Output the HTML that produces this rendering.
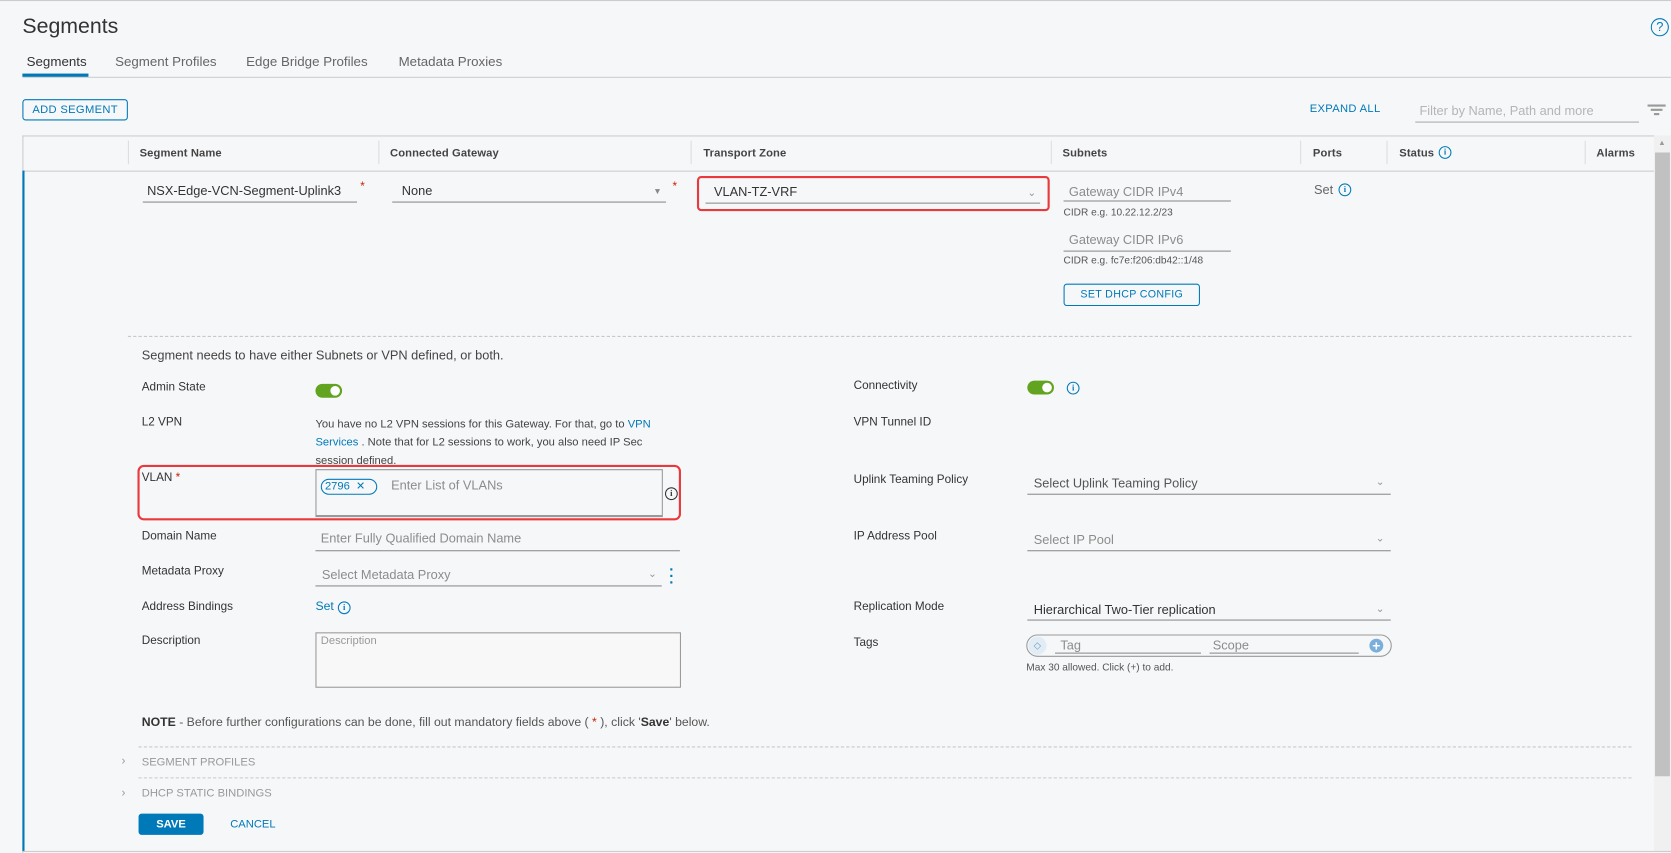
<!DOCTYPE html>
<html><head><meta charset="utf-8"><style>
html,body{margin:0;padding:0;width:1671px;height:852px;overflow:hidden;background:#f6f7f9}
#w{position:absolute;left:0;top:0;width:1568px;height:800px;transform:scale(1.06569,1.0663);transform-origin:0 0;font-family:"Liberation Sans",sans-serif;color:#333;background:#f6f7f9}
#w div,#w span{position:absolute;white-space:nowrap}
.l{font-size:11px;color:#333}
.ph{font-size:12px;color:#8c8c8c}
.u{height:1px;background:#8c8c8c}
.hd{font-size:10.5px;color:#444;top:138px;font-weight:bold;letter-spacing:.1px}
.sep{top:132px;width:1px;height:22px;background:#ddd}
.info{width:10px;height:10px;border:1.3px solid #0079b8;border-radius:50%;font-size:8px;line-height:10px;text-align:center;color:#0079b8;font-weight:bold;font-family:"Liberation Serif",serif}
.chev{font-size:10px;color:#999}
.tg{width:25px;height:13px;background:#62a420;border-radius:8px}
.tg::after{content:"";position:absolute;right:2px;top:2px;width:9px;height:9px;border-radius:50%;background:#fff}
.dash{height:0;border-top:1px dashed #c8c8c8}
</style></head><body><div id="w">
<div style="left:0;top:0;width:1568px;height:1px;background:#ccc"></div>
<div style="left:21px;top:14px;font-size:20px;color:#333">Segments</div>
<div style="left:1549px;top:17px;width:15px;height:15px;border:1.5px solid #0079b8;border-radius:50%;font-size:12px;line-height:15px;text-align:center;color:#0079b8">?</div>
<div style="left:25px;top:51px;font-size:12.5px;color:#333">Segments</div>
<div style="left:108px;top:51px;font-size:12.5px;color:#666">Segment Profiles</div>
<div style="left:231px;top:51px;font-size:12.5px;color:#666">Edge Bridge Profiles</div>
<div style="left:374px;top:51px;font-size:12.5px;color:#666">Metadata Proxies</div>
<div style="left:21px;top:72px;width:1547px;height:1px;background:#ccc"></div>
<div style="left:21px;top:69px;width:62px;height:3px;background:#0079b8"></div>
<div style="left:21px;top:93px;width:97px;height:18px;border:1px solid #0079b8;border-radius:3px;font-size:10.5px;line-height:18px;text-align:center;color:#0079b8;letter-spacing:.3px">ADD SEGMENT</div>
<div style="left:1229px;top:96px;font-size:10.5px;color:#0079b8;letter-spacing:.3px">EXPAND ALL</div>
<div class="ph" style="left:1332px;top:97px;color:#b5b5b5">Filter by Name, Path and more</div>
<div class="u" style="left:1328px;top:114px;width:210px;background:#aaa"></div>
<div style="left:1546px;top:98px;width:17px;height:1.5px;background:#999"></div>
<div style="left:1549px;top:102px;width:11px;height:1.5px;background:#999"></div>
<div style="left:1552px;top:106px;width:5px;height:1.5px;background:#999"></div>
<div style="left:21px;top:127px;width:1531px;height:672px;border:1px solid #ccc;border-bottom:none;border-right:none;background:#f6f7f9"></div>
<div style="left:22px;top:160px;width:1530px;height:1px;background:#ccc"></div>
<div class="sep" style="left:120px"></div><div class="sep" style="left:355px"></div><div class="sep" style="left:648px"></div><div class="sep" style="left:986px"></div><div class="sep" style="left:1220px"></div><div class="sep" style="left:1301px"></div><div class="sep" style="left:1487px"></div>
<div class="hd" style="left:131px">Segment Name</div>
<div class="hd" style="left:366px">Connected Gateway</div>
<div class="hd" style="left:660px">Transport Zone</div>
<div class="hd" style="left:997px">Subnets</div>
<div class="hd" style="left:1232px">Ports</div>
<div class="hd" style="left:1313px">Status</div><div class="info" style="left:1350px;top:137px">i</div>
<div class="hd" style="left:1498px">Alarms</div>
<div style="left:1552px;top:127px;width:16px;height:672px;background:#f0f0f0"></div>
<div style="left:1556px;top:131px;font-size:7px;color:#999">▲</div>
<div style="left:1553px;top:143px;width:14px;height:585px;background:#c1c1c1"></div>
<div style="left:21px;top:160px;width:2px;height:639px;background:#0079b8"></div>
<div style="left:21px;top:798px;width:1547px;height:1px;background:#ccc"></div>
<div style="left:138px;top:170px;width:197px;height:18px;overflow:hidden"><span style="left:0;top:2px;font-size:12px">NSX-Edge-VCN-Segment-Uplink3</span></div>
<div class="u" style="left:134px;top:189px;width:201px"></div>
<div style="left:338px;top:169px;font-size:11px;color:#c92100">*</div>
<div style="left:377px;top:172px;font-size:12px">None</div>
<div class="u" style="left:368px;top:189px;width:257px"></div>
<div style="left:613px;top:175px;font-size:8px;color:#888">▼</div>
<div style="left:631px;top:169px;font-size:11px;color:#c92100">*</div>
<div style="left:654px;top:165px;width:327px;height:29px;border:2px solid #e8393c;border-radius:4px"></div>
<div style="left:670px;top:173px;font-size:12px">VLAN-TZ-VRF</div>
<div class="u" style="left:662px;top:190px;width:314px"></div>
<div class="chev" style="left:964px;top:176px">⌄</div>
<div class="ph" style="left:1003px;top:173px">Gateway CIDR IPv4</div>
<div class="u" style="left:998px;top:188px;width:157px"></div>
<div style="left:998px;top:194px;font-size:9.5px;color:#555">CIDR e.g. 10.22.12.2/23</div>
<div class="ph" style="left:1003px;top:218px">Gateway CIDR IPv6</div>
<div class="u" style="left:998px;top:235px;width:157px"></div>
<div style="left:998px;top:239px;font-size:9.5px;color:#555">CIDR e.g. fc7e:f206:db42::1/48</div>
<div style="left:998px;top:266px;width:126px;height:19px;border:1px solid #0079b8;border-radius:3px;font-size:10px;line-height:19px;text-align:center;color:#0079b8;letter-spacing:.3px">SET DHCP CONFIG</div>
<div style="left:1233px;top:171px;font-size:12px;color:#666">Set</div><div class="info" style="left:1256px;top:172px">i</div>
<div class="dash" style="left:120px;top:315px;width:1411px"></div>
<div style="left:133px;top:326px;font-size:12px;color:#444">Segment needs to have either Subnets or VPN defined, or both.</div>
<div class="l" style="left:133px;top:357px">Admin State</div>
<div class="tg" style="left:296px;top:360px"></div>
<div class="l" style="left:133px;top:390px">L2 VPN</div>
<div style="left:296px;top:390px;font-size:10.5px;color:#444;line-height:17px">You have no L2 VPN sessions for this Gateway. For that, go to <span style="position:static;color:#0079b8">VPN</span><br><span style="position:static;color:#0079b8">Services</span> . Note that for L2 sessions to work, you also need IP Sec<br>session defined.</div>
<div style="left:129px;top:436px;width:506px;height:48px;border:2px solid #e8393c;border-radius:6px"></div>
<div class="l" style="left:133px;top:442px">VLAN <span style="position:static;color:#c92100">*</span></div>
<div style="left:296px;top:440px;width:324px;height:42px;border:1px solid #999;border-bottom:2px solid #999"></div>
<div style="left:301px;top:449px;width:51px;height:13px;border:1px solid #0079b8;border-radius:8px;font-size:10.5px;line-height:13px;color:#0079b8">&nbsp;2796 &nbsp;✕</div>
<div class="ph" style="left:367px;top:448px">Enter List of VLANs</div>
<div class="info" style="left:624px;top:457px;color:#333;border-color:#333">i</div>
<div class="l" style="left:133px;top:497px">Domain Name</div>
<div class="ph" style="left:301px;top:498px">Enter Fully Qualified Domain Name</div>
<div class="u" style="left:296px;top:516px;width:342px"></div>
<div class="l" style="left:133px;top:530px">Metadata Proxy</div>
<div class="ph" style="left:302px;top:532px">Select Metadata Proxy</div>
<div class="u" style="left:296px;top:549px;width:325px"></div>
<div class="chev" style="left:608px;top:533px">⌄</div>
<div style="left:628px;top:531px;font-size:14px;color:#0079b8;line-height:6px;font-weight:bold">·<br>·<br>·</div>
<div class="l" style="left:133px;top:563px">Address Bindings</div>
<div style="left:296px;top:563px;font-size:11.5px;color:#0079b8">Set</div><div class="info" style="left:317px;top:564px">i</div>
<div class="l" style="left:133px;top:595px">Description</div>
<div style="left:296px;top:593px;width:341px;height:50px;border:1px solid #999;background:#f8f8f8"></div>
<div style="left:301px;top:595px;font-size:10.5px;color:#999">Description</div>
<div class="l" style="left:801px;top:356px">Connectivity</div>
<div class="tg" style="left:964px;top:357px"></div><div class="info" style="left:1001px;top:358px">i</div>
<div class="l" style="left:801px;top:390px">VPN Tunnel ID</div>
<div class="l" style="left:801px;top:444px">Uplink Teaming Policy</div>
<div style="left:970px;top:446px;font-size:12px;color:#555">Select Uplink Teaming Policy</div>
<div class="u" style="left:964px;top:463px;width:341px"></div><div class="chev" style="left:1291px;top:447px">⌄</div>
<div class="l" style="left:801px;top:497px">IP Address Pool</div>
<div class="ph" style="left:970px;top:499px">Select IP Pool</div>
<div class="u" style="left:964px;top:516px;width:341px"></div><div class="chev" style="left:1291px;top:500px">⌄</div>
<div class="l" style="left:801px;top:563px">Replication Mode</div>
<div style="left:970px;top:565px;font-size:12px;color:#333">Hierarchical Two-Tier replication</div>
<div class="u" style="left:964px;top:581px;width:341px"></div><div class="chev" style="left:1291px;top:566px">⌄</div>
<div class="l" style="left:801px;top:597px">Tags</div>
<div style="left:963px;top:595px;width:341px;height:19px;border:1px solid #999;border-radius:11px"></div>
<div style="left:965px;top:597px;width:17px;height:17px;border-radius:50%;background:#e1ecf4;font-size:9px;line-height:17px;text-align:center;color:#6a9ac2">◇</div>
<div class="ph" style="left:995px;top:598px">Tag</div><div class="u" style="left:990px;top:612px;width:137px"></div>
<div class="ph" style="left:1138px;top:598px">Scope</div><div class="u" style="left:1135px;top:612px;width:140px"></div>
<div style="left:1285px;top:599px;width:13px;height:13px;border-radius:50%;background:#7aaedb;color:#fff;font-size:13px;line-height:13px;text-align:center;font-weight:bold">+</div>
<div style="left:963px;top:621px;font-size:9.5px;color:#555">Max 30 allowed. Click (+) to add.</div>
<div style="left:133px;top:672px;font-size:11.5px;color:#555"><b style="color:#333">NOTE</b> - Before further configurations can be done, fill out mandatory fields above ( <span style="position:static;color:#c92100">*</span> ), click '<b style="color:#333">Save</b>' below.</div>
<div class="dash" style="left:130px;top:700px;width:1401px"></div>
<div style="left:114px;top:708px;font-size:11px;color:#999">›</div>
<div style="left:133px;top:709px;font-size:10.5px;color:#999">SEGMENT PROFILES</div>
<div class="dash" style="left:130px;top:729px;width:1401px"></div>
<div style="left:114px;top:738px;font-size:11px;color:#999">›</div>
<div style="left:133px;top:738px;font-size:10.5px;color:#999">DHCP STATIC BINDINGS</div>
<div style="left:130px;top:763px;width:61px;height:20px;background:#0079b8;border-radius:3px;color:#fff;font-size:10.5px;line-height:20px;text-align:center;font-weight:bold">SAVE</div>
<div style="left:216px;top:767px;font-size:10.5px;color:#0079b8">CANCEL</div>
</div></body></html>
